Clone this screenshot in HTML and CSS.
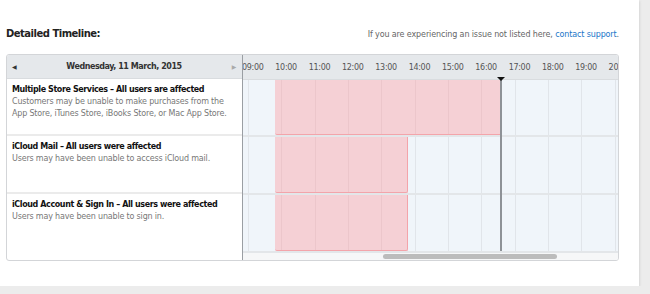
FILE: index.html
```html
<!DOCTYPE html>
<html lang="en">
<head>
    <meta charset="UTF-8">
    <title>Detailed Timeline</title>
    <link rel="stylesheet" href="styles.css">
</head>
<body>
    <div class="card">
        <div class="top">
            <h2>Detailed Timeline:</h2>
            <p class="note">If you are experiencing an issue not listed here, <a href="#">contact support</a>.</p>
        </div>

        <div class="timeline">
            <!-- event list -->
            <div class="events">
                <div class="date-bar">
                    <span class="arrow">&#9664;</span>
                    <span class="date">Wednesday, 11 March, 2015</span>
                    <span class="arrow off">&#9654;</span>
                </div>
                <div class="event">
                    <div class="event-title">Multiple Store Services &ndash; All users are affected</div>
                    <div class="event-text">Customers may be unable to make purchases from the App Store, iTunes Store, iBooks Store, or Mac App Store.</div>
                </div>
                <div class="event">
                    <div class="event-title">iCloud Mail &ndash; All users were affected</div>
                    <div class="event-text">Users may have been unable to access iCloud mail.</div>
                </div>
                <div class="event last">
                    <div class="event-title">iCloud Account &amp; Sign In &ndash; All users were affected</div>
                    <div class="event-text">Users may have been unable to sign in.</div>
                </div>
            </div>

            <!-- chart -->
            <div class="chart">
                <div class="hours">
                    <span>09:00</span><span>10:00</span><span>11:00</span><span>12:00</span>
                    <span>13:00</span><span>14:00</span><span>15:00</span><span>16:00</span>
                    <span>17:00</span><span>18:00</span><span>19:00</span><span>20:00</span>
                </div>
                <div class="grid">
                    <div class="lane"><div class="bar" style="left: 32px; width: 226px;"></div></div>
                    <div class="lane"><div class="bar" style="left: 32px; width: 132px;"></div></div>
                    <div class="lane"><div class="bar" style="left: 32px; width: 132px;"></div></div>
                    <div class="now" style="left: 257px;"></div>
                </div>
                <div class="scroll"><div class="thumb"></div></div>
            </div>
        </div>
    </div>
</body>
</html>
```

FILE: styles.css
```css
body {
    margin: 0;
    background-color: #ececec;
    font-family: "DejaVu Sans", Verdana, sans-serif;
}

.card {
    width: 627px;
    height: 280px;
    padding: 0 6px 6px 6px;
    background-color: #fff;
    box-shadow: 1px 1px 2px #d6d6d6;
}

.top {
    display: flex;
    justify-content: space-between;
    align-items: baseline;
    padding-top: 28px;
    height: 26px;
}

h2 {
    margin: 0;
    font-size: 10px;
    letter-spacing: -0.5px;
    font-weight: bold;
    color: #222;
}

.note {
    margin: 0 14px 0 0;
    font-size: 8px;
    letter-spacing: -0.12px;
    color: #666;
}

.note a {
    color: #1a76c8;
    text-decoration: none;
}

.timeline {
    display: flex;
    width: 611px;
    border: 1px solid #d3d5d8;
    border-radius: 3px;
    overflow: hidden;
}

.events {
    width: 235px;
    border-right: 1px solid #9a9ea3;
}

.date-bar {
    display: flex;
    align-items: center;
    justify-content: space-between;
    height: 23px;
    padding: 0 6px 0 5px;
    background-color: #e5e8eb;
    border-bottom: 1px solid #d9dcdf;
    font-size: 8px;
    font-weight: bold;
    letter-spacing: -0.45px;
    color: #333;
}

.arrow {
    font-size: 6px;
    color: #333;
}

.arrow.off {
    color: #aaa;
}

.event {
    height: 57px;
    padding: 5px 5px 0 5px;
    box-sizing: border-box;
    border-bottom: 2px solid #ebebeb;
}

.event + .event {
    height: 58px;
}

.event.last {
    height: 66px;
    border-bottom: none;
}

.event-title {
    font-size: 8px;
    font-weight: bold;
    letter-spacing: -0.4px;
    color: #111;
    line-height: 12px;
}

.event-text {
    font-size: 8px;
    letter-spacing: -0.18px;
    color: #777;
    line-height: 12px;
}

.chart {
    flex: 1;
    overflow: hidden;
}

.hours {
    display: flex;
    height: 24px;
    align-items: center;
    margin-left: -1px;
    background-color: #e5e8eb;
    font-size: 8px;
    letter-spacing: -0.3px;
    color: #555;
    white-space: nowrap;
}

.hours span {
    flex: 0 0 33.33px;
}

.grid {
    position: relative;
    height: 172px;
    background-color: #f0f5fa;
    background-image: repeating-linear-gradient(to right, transparent 0, transparent 5px, #e1e5ea 5px, #e1e5ea 6px, transparent 6px, transparent 33.33px);
}

.lane {
    position: relative;
    height: 56px;
    border-bottom: 2px solid #e3e6e9;
}

.lane:first-child {
    height: 55px;
    border-top: 1px solid #d9dcdf;
}

.lane:last-child {
    border-bottom: none;
    height: 56px;
}

.bar {
    position: absolute;
    top: 0;
    bottom: 0;
    background-color: rgba(252, 152, 158, 0.4);
    border-right: 1px solid #f3a4aa;
    border-bottom: 1px solid #f3a4aa;
    border-radius: 0 0 2px 2px;
}

.now {
    position: absolute;
    top: 0;
    bottom: 0;
    width: 2px;
    background-color: #8e9297;
}

.now::before {
    content: "";
    position: absolute;
    top: -2px;
    left: -3px;
    border-left: 4px solid transparent;
    border-right: 4px solid transparent;
    border-top: 4px solid #111;
}

.scroll {
    height: 9px;
    background-color: #f6f7f8;
    border-top: 1px solid #e3e6e9;
    box-sizing: border-box;
    padding-top: 2px;
}

.thumb {
    width: 174px;
    height: 5px;
    margin-left: 140px;
    border-radius: 3px;
    background-color: #bcbcbc;
}
```
